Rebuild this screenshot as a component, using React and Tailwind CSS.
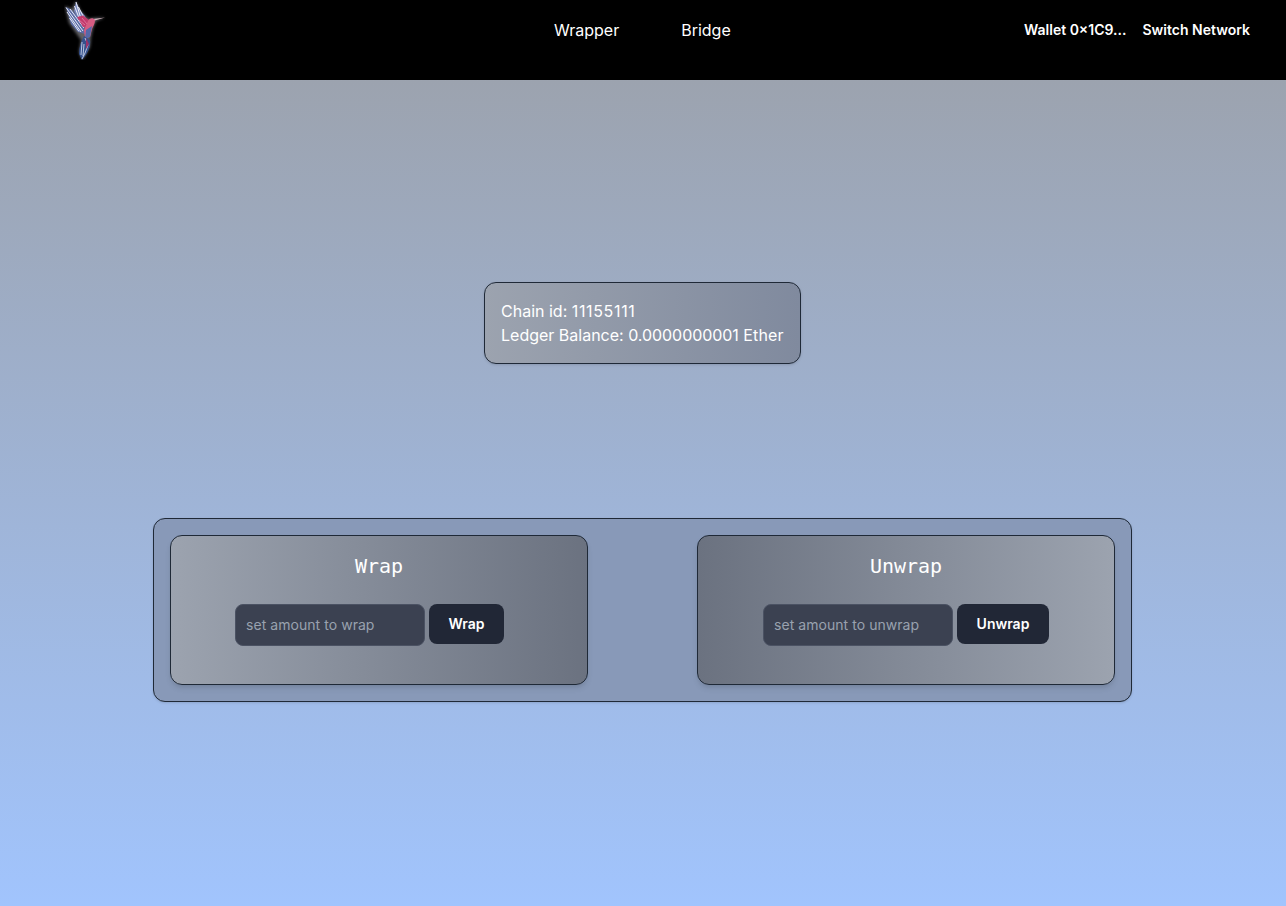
import React from "react"

const Bird = () => {
    const outline = "M1 6 L8 9 L12 1 L16 10 L21 16 L25 19 L29 18 L41 17.5 L32 21 L29 28 L27 37 L26 47 L21 56 L18 60 L15 52 L17 40 L12 33 L5 23 Z"
    return (
        <svg viewBox="0 0 42 60" className="w-[42px] h-[60px] block">
            <defs>
                <filter id="glow" x="-30%" y="-30%" width="160%" height="160%">
                    <feGaussianBlur stdDeviation="1.4" />
                </filter>
            </defs>
            <path d={outline} fill="#b0b0ba" opacity="0.55" filter="url(#glow)" />
            {/* beak */}
            <path d="M29 19 L41 17.5 L30 20.8 Z" fill="#d0b3bc" />
            {/* back wing feathers */}
            <path d="M2 7 L8 10 L13 16 L20 24 L21 34 L14 32 L7 24 Z" fill="#5a6ca6" />
            <path d="M2 7.5 L19 31 M3 12 L17 32 M5.5 18 L15 31.5 M6 9 L20 28" stroke="#e6e9f5" strokeWidth="1" fill="none" />
            {/* front wing feathers */}
            <path d="M12 1.5 L16 10 L21 16 L23 22 L15 20 L10 11 Z" fill="#7484bc" />
            <path d="M12 2 L17 19 M10.5 6 L15 18 M14.5 7 L20 18" stroke="#eef0f8" strokeWidth="1" fill="none" />
            <path d="M13 17 L19 15.5 L25 20 L25 28 L19 27 Z" fill="#c23a6c" />
            <path d="M15 20 L21 25 M18 18 L23 24" stroke="#e37fa4" strokeWidth="0.8" fill="none" />
            {/* head and body */}
            <path d="M24 21 C25 18 29 17 31 20 C31 24 29 26 28 29 L26 37 L21 38 L20 30 Z" fill="#d65c82" />
            <path d="M28 26 L26 37 L21 39 L22 30 Z" fill="#5568a8" />
            {/* tail */}
            <path d="M20 36 L26 40 C27 46 24 52 21 56 L18 60 L15 54 C15 47 17 41 20 36 Z" fill="#34508c" />
            <path d="M21 38 L24 45 L21 53 L18 59 M18 42 L17 55 M20 44 L19 56" stroke="#dbe2f3" strokeWidth="0.8" fill="none" />
            <path d="M22 38 L25 44 L22 49 Z" fill="#97316a" />
        </svg>
    )
}

export default function App(){
    const font = "font-['Inter','Liberation_Sans',sans-serif]"
    return (
        <div className={`${font} min-h-screen flex flex-col`}>
            <nav className="h-20 bg-black text-white flex flex-row shrink-0">
                <div className="w-[554px] pl-16 shrink-0">
                    <Bird />
                </div>
                <div className="flex flex-row gap-[62px] h-[60px] items-center shrink-0">
                    <a className="text-base">Wrapper</a>
                    <a className="text-base">Bridge</a>
                </div>
                <div className="ml-auto flex flex-row gap-4 h-[60px] items-center pr-9 text-sm font-semibold text-white">
                    <button type="button">Wallet 0×1C9...</button>
                    <button type="button">Switch Network</button>
                </div>
            </nav>
            <main className="flex-grow flex flex-col items-center bg-gradient-to-b from-[#9ca3af] to-[#a1c4fd] pt-[202px] pr-px">
                <div className="w-[317px] h-[82px] border border-[#1f2937] rounded-xl p-4 text-white text-base bg-gradient-to-r from-[#9ca3af] to-[#808a9e] shadow-sm">
                    <p>Chain id: <span className="tracking-[0.65px]">11155111</span></p>
                    <p className="whitespace-nowrap">Ledger Balance: <span className="tracking-[-0.05px]">0.0000000001</span> <span className="tracking-[0.15px]">Ether</span></p>
                </div>
                <div className="mt-[154px] w-[979px] h-[184px] p-4 border border-[#1f2937] rounded-xl bg-[#8899b8] shadow-sm flex flex-row justify-between">
                    <div className="w-[418px] h-[150px] border border-[#1f2937] rounded-xl bg-gradient-to-r from-[#9ca3af] to-[#6b7280] shadow-md flex flex-col items-center pt-4">
                        <h2 className="font-['DejaVu_Sans_Mono',monospace] text-xl text-white h-7 leading-7">Wrap</h2>
                        <div className="flex flex-row gap-1 mt-6 ml-[-19px] items-start">
                            <input placeholder="set amount to wrap" className="w-[190px] h-[42px] px-2.5 pb-0.5 rounded-lg bg-[#3b4151] border border-[#4b5263] text-sm tracking-[0.05px] placeholder-gray-400 text-white" />
                            <button type="button" className="w-[75px] h-10 rounded-lg bg-[#212736] text-white text-sm font-semibold">Wrap</button>
                        </div>
                    </div>
                    <div className="w-[418px] h-[150px] border border-[#1f2937] rounded-xl bg-gradient-to-l from-[#9ca3af] to-[#6b7280] shadow-md flex flex-col items-center pt-4">
                        <h2 className="font-['DejaVu_Sans_Mono',monospace] text-xl text-white h-7 leading-7">Unwrap</h2>
                        <div className="flex flex-row gap-1 mt-6 items-start">
                            <input placeholder="set amount to unwrap" className="w-[190px] h-[42px] px-2.5 pb-0.5 rounded-lg bg-[#3b4151] border border-[#4b5263] text-sm tracking-[0.05px] placeholder-gray-400 text-white" />
                            <button type="button" className="w-[92px] h-10 rounded-lg bg-[#212736] text-white text-sm font-semibold">Unwrap</button>
                        </div>
                    </div>
                </div>
            </main>
        </div>
    )
}
